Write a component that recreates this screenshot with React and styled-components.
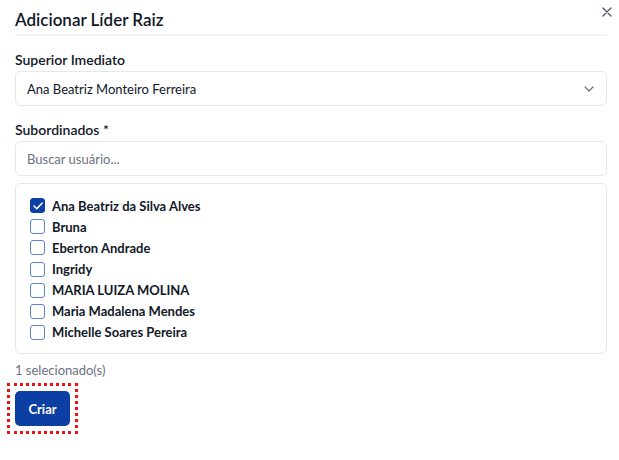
import React, { useState } from "react";
import styled, { createGlobalStyle } from "styled-components";

const Global = createGlobalStyle`
  * { box-sizing: border-box; }
  body { margin: 0; background: #fff; font-family: "Segoe UI", Lato, "Noto Sans", sans-serif; color: #111827; }
`;

const Dialog = styled.div`
  position: relative;
  width: 619px;
  height: 460px;
  padding: 9px 12px 0 15px;
  display: flex;
  flex-direction: column;
`;

const Header = styled.div`
  padding-bottom: 3px;
  border-bottom: 2px solid #f1f3f7;
`;

const Title = styled.h2`
  margin: 0;
  font-size: 17px;
  font-weight: 600;
  line-height: 22px;
  color: #111827;
`;

const Close = styled.button`
  position: absolute;
  top: 5px;
  right: 5px;
  border: 0;
  background: none;
  padding: 0;
  width: 14px;
  height: 14px;
  display: flex;
  align-items: center;
  justify-content: center;
  color: #4b5563;
  cursor: pointer;
`;

const Field = styled.div`
  display: flex;
  flex-direction: column;
  gap: 3px;
  margin-top: ${(p) => p.$mt || 0}px;
`;

const Label = styled.label`
  font-size: 14px;
  font-weight: 600;
  line-height: 17px;
  color: #111827;
`;

const Box = styled.div`
  border: 1px solid #e5e7eb;
  border-radius: 6px;
  background: #fff;
`;

const Select = styled(Box)`
  height: 35px;
  display: flex;
  align-items: center;
  justify-content: space-between;
  padding: 0 12px 0 11px;
  font-size: 13px;
  color: #111827;
`;

const Input = styled.input`
  height: 35px;
  border: 1px solid #e5e7eb;
  border-radius: 6px;
  padding: 0 11px;
  font-family: inherit;
  font-size: 13px;
  color: #111827;
  outline: none;
  &::placeholder { color: #6b7280; }
`;

const List = styled(Box)`
  display: flex;
  flex-direction: column;
  gap: 3.2px;
  margin-top: 4px;
  padding: 13px 14px 12px;
  height: 171px;
`;

const Row = styled.label`
  display: flex;
  align-items: center;
  gap: 7px;
  height: 18px;
  font-size: 13px;
  font-weight: 700;
  color: #111827;
  cursor: pointer;
`;

const Check = styled.span`
  width: 15px;
  height: 15px;
  border-radius: 3px;
  border: 1.5px solid ${(p) => (p.$on ? "#0b3fa3" : "#5c82cf")};
  background: ${(p) => (p.$on ? "#0b3fa3" : "#fff")};
  display: flex;
  align-items: center;
  justify-content: center;
  flex: none;
`;

const Count = styled.div`
  margin-top: 7px;
  font-size: 13px;
  line-height: 18px;
  color: #6b7280;
`;

const Focus = styled.div`
  margin-top: 4px;
  margin-left: -8px;
  align-self: flex-start;
  padding: 5px;
  border: 3px dotted #f01010;
`;

const Button = styled.button`
  display: block;
  width: 55px;
  height: 35px;
  border: 0;
  border-radius: 5px;
  background: #0b3fa3;
  color: #fff;
  font-family: inherit;
  font-size: 13px;
  font-weight: 700;
  cursor: pointer;
`;

const people = [
  "Ana Beatriz da Silva Alves",
  "Bruna",
  "Eberton Andrade",
  "Ingridy",
  "MARIA LUIZA MOLINA",
  "Maria Madalena Mendes",
  "Michelle Soares Pereira",
];

export default function App() {
  const [sel, setSel] = useState({ 0: true });
  const n = Object.values(sel).filter(Boolean).length;
  return (
    <>
      <Global />
      <Dialog>
        <Header>
          <Title>Adicionar Líder Raiz</Title>
        </Header>
        <Close aria-label="Fechar">
          <svg width="10" height="10" viewBox="0 0 10 10" fill="none" stroke="currentColor" strokeWidth="1.3" strokeLinecap="round">
            <path d="M1 1l8 8M9 1l-8 8" />
          </svg>
        </Close>
        <Field $mt={15}>
          <Label>Superior Imediato</Label>
          <Select>
            <span>Ana Beatriz Monteiro Ferreira</span>
            <svg width="10" height="6" viewBox="0 0 10 6" fill="none" stroke="#6b7280" strokeWidth="1.2" strokeLinecap="round" strokeLinejoin="round">
              <path d="M1 1l4 4 4-4" />
            </svg>
          </Select>
        </Field>
        <Field $mt={15}>
          <Label>Subordinados *</Label>
          <Input placeholder="Buscar usuário..." />
          <List>
            {people.map((p, i) => (
              <Row key={p} onClick={() => setSel((s) => ({ ...s, [i]: !s[i] }))}>
                <Check $on={!!sel[i]}>
                  {sel[i] && (
                    <svg width="10" height="8" viewBox="0 0 10 8" fill="none" stroke="#fff" strokeWidth="1.6" strokeLinecap="round" strokeLinejoin="round">
                      <path d="M1 4l2.8 2.8L9 1.2" />
                    </svg>
                  )}
                </Check>
                {p}
              </Row>
            ))}
          </List>
        </Field>
        <Count>{n} selecionado(s)</Count>
        <Focus>
          <Button>Criar</Button>
        </Focus>
      </Dialog>
    </>
  );
}
